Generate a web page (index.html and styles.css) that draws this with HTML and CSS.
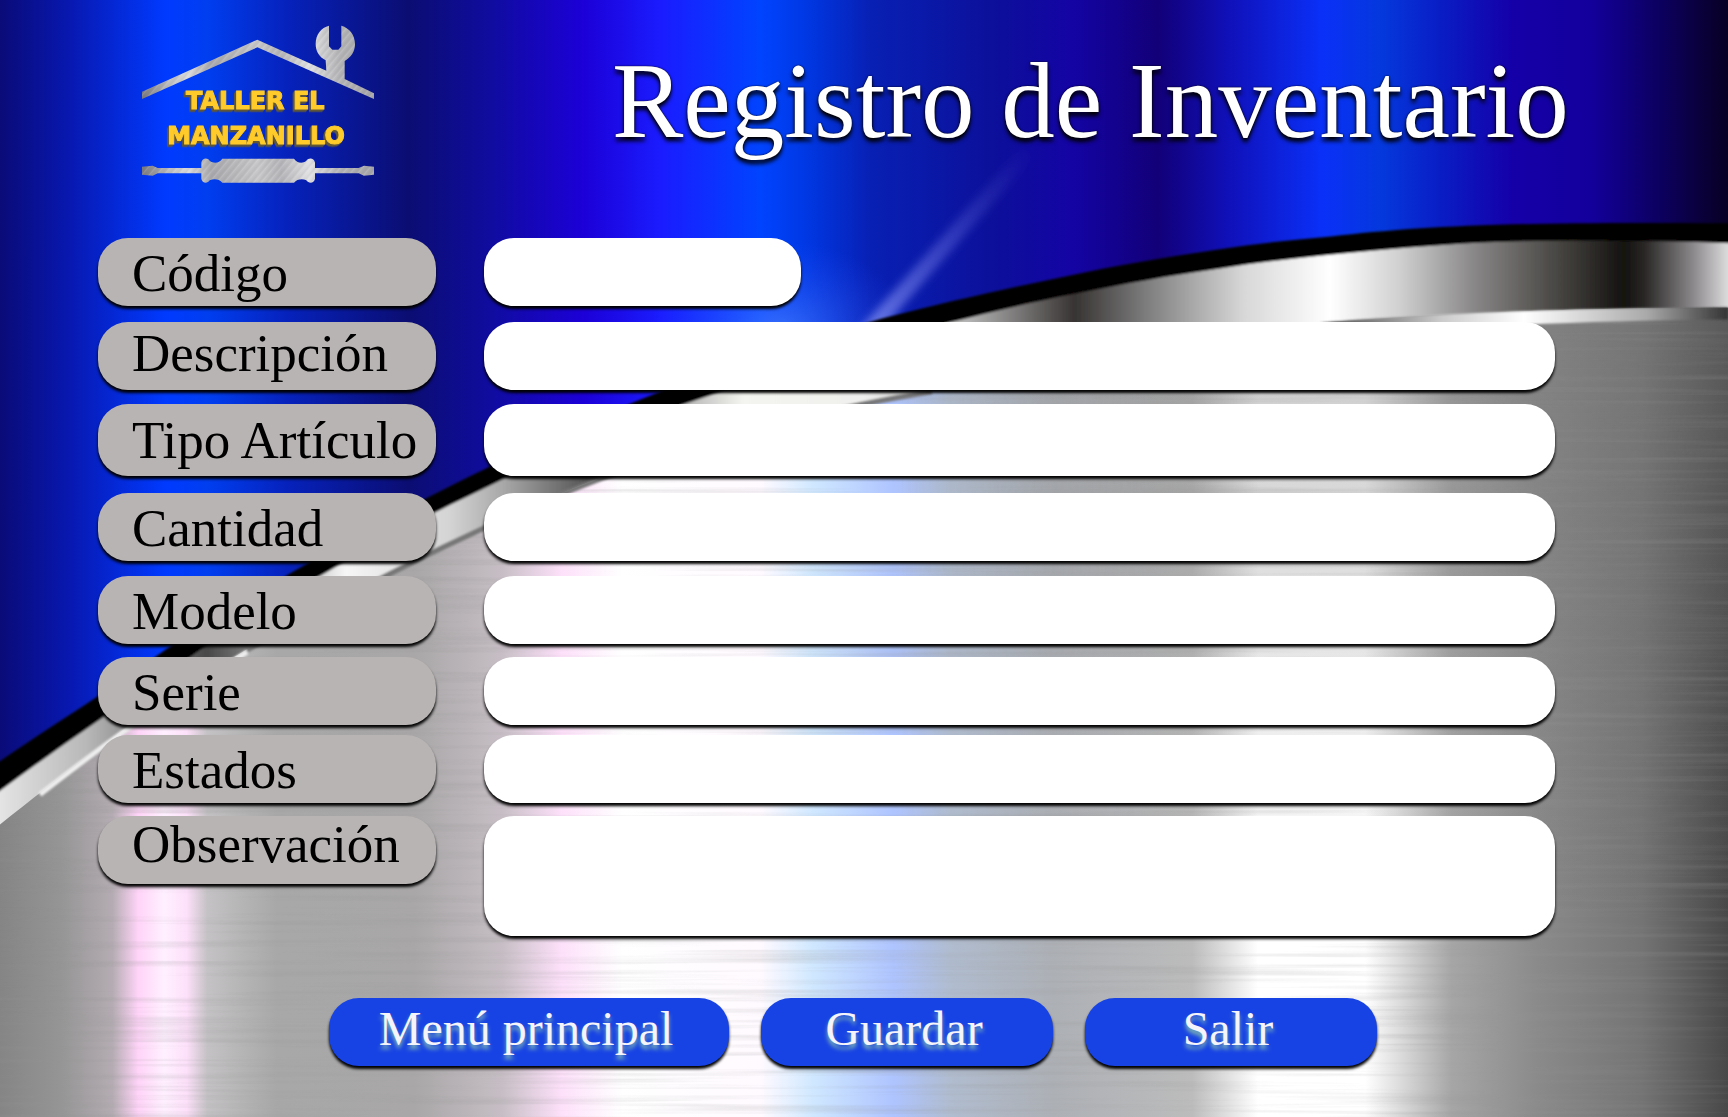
FILE: index.html
```html
<!DOCTYPE html>
<html lang="es">
<head>
<meta charset="utf-8">
<meta name="viewport" content="width=device-width, initial-scale=1">
<title>Registro de Inventario</title>
<link rel="stylesheet" href="styles.css">
</head>
<body>
<div class="page">
  <svg class="backdrop" viewBox="0 0 1728 1117" preserveAspectRatio="none" aria-hidden="true">
    <defs>
      <linearGradient id="blue">
        <stop offset="0" stop-color="#0a0b78"/><stop offset=".04" stop-color="#0818b0"/>
        <stop offset=".096" stop-color="#003aff"/><stop offset=".12" stop-color="#003ef0"/>
        <stop offset=".166" stop-color="#0622bc"/><stop offset=".236" stop-color="#0b0d72"/>
        <stop offset=".285" stop-color="#100ca0"/><stop offset=".338" stop-color="#1c00d8"/>
        <stop offset=".383" stop-color="#1a1cff"/><stop offset=".44" stop-color="#0044ff"/>
        <stop offset=".466" stop-color="#0038e4"/><stop offset=".504" stop-color="#0820b4"/>
        <stop offset=".574" stop-color="#0c109a"/><stop offset=".62" stop-color="#1404a4"/>
        <stop offset=".67" stop-color="#120078"/><stop offset=".71" stop-color="#1010b8"/>
        <stop offset=".765" stop-color="#0a30f8"/><stop offset=".80" stop-color="#0438dc"/>
        <stop offset=".835" stop-color="#0a1cc4"/><stop offset=".875" stop-color="#1500a8"/>
        <stop offset=".92" stop-color="#13009c"/><stop offset=".96" stop-color="#0c0060"/>
        <stop offset="1" stop-color="#080024"/>
      </linearGradient>
      <linearGradient id="band" gradientUnits="userSpaceOnUse" x1="0" y1="0" x2="1728" y2="0">
        <stop offset="0" stop-color="#e4e4e4"/><stop offset=".05" stop-color="#b8b8b8"/>
        <stop offset=".09" stop-color="#777"/><stop offset=".12" stop-color="#484848"/>
        <stop offset=".15" stop-color="#888"/><stop offset=".2" stop-color="#f6f6f6"/>
        <stop offset=".26" stop-color="#d4d4d4"/><stop offset=".29" stop-color="#aaa"/>
        <stop offset=".34" stop-color="#555"/><stop offset=".39" stop-color="#aaa"/>
        <stop offset=".43" stop-color="#f4f4f0"/><stop offset=".5" stop-color="#f0f0ee"/>
        <stop offset=".56" stop-color="#b4b4b4"/><stop offset=".622" stop-color="#383433"/>
        <stop offset=".665" stop-color="#808080"/><stop offset=".72" stop-color="#d8d8d8"/>
        <stop offset=".77" stop-color="#fff"/><stop offset=".81" stop-color="#d0d0d0"/>
        <stop offset=".855" stop-color="#868484"/><stop offset=".9" stop-color="#4a4845"/>
        <stop offset=".94" stop-color="#141210"/><stop offset=".952" stop-color="#2a2826"/>
        <stop offset=".98" stop-color="#8c898c"/><stop offset="1" stop-color="#dcdcdc"/>
      </linearGradient>
      <linearGradient id="steel" gradientUnits="userSpaceOnUse" x1="0" y1="0" x2="1728" y2="0">
        <stop offset="0" stop-color="#858585"/><stop offset=".035" stop-color="#959595"/>
        <stop offset=".065" stop-color="#b4acb2"/><stop offset=".08" stop-color="#ffd4f8"/>
        <stop offset=".095" stop-color="#fff0ff"/><stop offset=".108" stop-color="#fde0fa"/>
        <stop offset=".12" stop-color="#c4c2c4"/><stop offset=".16" stop-color="#a8a8a8"/>
        <stop offset=".24" stop-color="#a9a7a8"/><stop offset=".29" stop-color="#c6bec4"/>
        <stop offset=".325" stop-color="#fde0fa"/><stop offset=".36" stop-color="#fff"/>
        <stop offset=".44" stop-color="#fffaff"/><stop offset=".47" stop-color="#d0e8ff"/>
        <stop offset=".517" stop-color="#aec4ff"/><stop offset=".55" stop-color="#b0bccf"/>
        <stop offset=".61" stop-color="#adb0b5"/><stop offset=".69" stop-color="#bcbcbc"/>
        <stop offset=".728" stop-color="#fff"/><stop offset=".79" stop-color="#fff"/>
        <stop offset=".81" stop-color="#dcdcdc"/><stop offset=".84" stop-color="#a6a6a6"/>
        <stop offset=".89" stop-color="#8a8a8a"/><stop offset=".95" stop-color="#747474"/>
        <stop offset="1" stop-color="#484848"/>
      </linearGradient>
      <linearGradient id="shade" x1="0" y1="0" x2="0" y2="1">
        <stop offset="0" stop-color="#777" stop-opacity=".4"/>
        <stop offset=".4" stop-color="#777" stop-opacity=".2"/>
        <stop offset=".75" stop-color="#777" stop-opacity="0"/>
      </linearGradient>
      <linearGradient id="shadeEdge">
        <stop offset="0" stop-color="#000"/><stop offset=".3" stop-color="#fff"/>
      </linearGradient>
      <mask id="shadeMask"><rect x="900" y="300" width="828" height="817" fill="url(#shadeEdge)"/></mask>
      <linearGradient id="rim" gradientUnits="userSpaceOnUse" x1="1320" y1="0" x2="1728" y2="0">
        <stop offset="0" stop-color="#444"/><stop offset=".3" stop-color="#ccc"/>
        <stop offset=".5" stop-color="#fff"/><stop offset=".8" stop-color="#aaa"/>
        <stop offset="1" stop-color="#333"/>
      </linearGradient>
      <linearGradient id="ray" gradientUnits="userSpaceOnUse" x1="870" y1="320" x2="1035" y2="150">
        <stop offset="0" stop-color="#7f8cf0" stop-opacity=".75"/>
        <stop offset="1" stop-color="#5a5ad8" stop-opacity="0"/>
      </linearGradient>
      <radialGradient id="glow">
        <stop offset="0" stop-color="#5a8cff" stop-opacity=".6"/>
        <stop offset="1" stop-color="#2a50ff" stop-opacity="0"/>
      </radialGradient>
      <filter id="soft"><feGaussianBlur stdDeviation="4"/></filter>
      <filter id="edge"><feGaussianBlur stdDeviation="1"/></filter>
      <filter id="brushed" x="0" y="0" width="100%" height="100%">
        <feTurbulence type="fractalNoise" baseFrequency=".003 .16" numOctaves="3" seed="4"/>
        <feColorMatrix values="0 0 0 0 .3  0 0 0 0 .3  0 0 0 0 .3  2.4 0 0 0 -1.1"/>
      </filter>
      <clipPath id="plate">
        <path d="M0 823C120 728 160 700 247 648C400 564 500 515 603 476C750 424 850 403 932 390C1080 360 1200 340 1320 322C1414 315 1524 308 1728 307V1117H0Z"/>
      </clipPath>
    </defs>
    <rect width="1728" height="1117" fill="url(#blue)"/>
    <ellipse cx="780" cy="330" rx="130" ry="90" fill="url(#glow)"/>
    <path d="M845 345L888 322L1048 140L1028 140Z" fill="url(#ray)" filter="url(#soft)"/>
    <g filter="url(#edge)">
      <path d="M-9 766C50 725 90 702 166 648C250 595 340 542 425 498C500 460 580 422 660 391C740 362 810 338 882 318C960 298 1030 283 1104 268C1180 254 1255 242 1331 236C1420 226 1500 221 1737 223V1130H-9Z" fill="#000"/>
      <path d="M-9 796C50 752 103 716 207 644C255 612 290 592 339 564C400 528 450 504 508 476C570 444 640 418 712 394C790 366 870 343 949 322C990 312 1030 302 1076 293C1125 283 1170 275 1220 268C1270 260 1320 255 1375 250C1420 246 1465 242 1513 241C1590 239 1660 240 1737 243V1130H-9Z" fill="url(#band)"/>
    </g>
    <g clip-path="url(#plate)">
      <rect y="300" width="1728" height="817" fill="url(#steel)"/>
      <rect x="900" y="300" width="828" height="817" fill="url(#shade)" mask="url(#shadeMask)"/>
      <rect y="300" width="1728" height="817" filter="url(#brushed)" opacity=".24"/>
    </g>
    <g filter="url(#edge)" fill="none">
      <path d="M40 793C120 731 160 703 247 651" stroke="#eee" stroke-width="5"/>
      <path d="M247 649C400 565 500 516 603 477C750 425 850 404 932 391" stroke="#777" stroke-width="5"/>
    </g>
    <path d="M1320 322C1414 315 1524 308 1728 307V319C1600 320 1500 325 1400 330Z" fill="url(#rim)" filter="url(#edge)"/>
  </svg>

  <header class="header">
    <svg class="logo" viewBox="66 40 699 480" role="img" aria-label="Taller El Manzanillo">
      <defs>
        <linearGradient id="metal" gradientUnits="userSpaceOnUse" x1="66" y1="0" x2="762" y2="0">
          <stop offset="0" stop-color="#77777c"/><stop offset=".12" stop-color="#bdbdc0"/>
          <stop offset=".2" stop-color="#d8d8da"/><stop offset=".3" stop-color="#a8a8ac"/>
          <stop offset=".5" stop-color="#c6c6c8"/><stop offset=".6" stop-color="#b4b4b8"/>
          <stop offset=".72" stop-color="#e0e0e2"/><stop offset=".85" stop-color="#b4b4b6"/>
          <stop offset="1" stop-color="#a4a4a8"/>
        </linearGradient>
        <pattern id="grain" width="17" height="40" patternUnits="userSpaceOnUse" patternTransform="rotate(40)">
          <rect x="2" width="2" height="40" fill="#666" opacity=".18"/>
          <rect x="9" width="3" height="40" fill="#fff" opacity=".18"/>
        </pattern>
        <g id="tools">
          <path d="M66 243L412 87L619 180L617 149C596 138 587 120 587 100C587 72 604 50 627 45V107L637 117H655L664 107V45C689 52 705 74 705 100C705 123 693 140 674 151V205L762 248V265L412 110L66 265Z"/>
          <path d="M66 468L98 465L113 472H244V456C247 441 263 441 269 450C282 460 298 457 307 444H522C531 457 547 460 559 450C566 441 582 441 585 456V472H716L732 465L762 468V492L732 495L716 488H585V504C582 519 566 519 559 509C547 503 531 505 522 516H307C298 505 282 503 269 509C263 519 247 519 244 504V488H113L98 495L66 492Z"/>
        </g>
      </defs>
      <use href="#tools" fill="url(#metal)"/>
      <use href="#tools" fill="url(#grain)"/>
      <text class="logo-text" x="406" y="296">TALLER EL</text>
      <text class="logo-text" x="408" y="401">MANZANILLO</text>
    </svg>
    <h1 class="title">Registro de Inventario</h1>
  </header>

  <form class="form">
    <div class="fields">
      <label class="pill" for="codigo">Código</label>
      <input class="field field-short" id="codigo" type="text">
      <label class="pill pill-raised" for="descripcion">Descripción</label>
      <input class="field" id="descripcion" type="text">
      <label class="pill pill-tall" for="tipo">Tipo Artículo</label>
      <input class="field field-tall" id="tipo" type="text">
      <label class="pill" for="cantidad">Cantidad</label>
      <input class="field" id="cantidad" type="text">
      <label class="pill" for="modelo">Modelo</label>
      <input class="field" id="modelo" type="text">
      <label class="pill" for="serie">Serie</label>
      <input class="field" id="serie" type="text">
      <label class="pill" for="estados">Estados</label>
      <input class="field" id="estados" type="text">
      <label class="pill pill-high" for="observacion">Observación</label>
      <textarea class="field field-area" id="observacion"></textarea>
    </div>
    <div class="actions">
      <button class="button button-wide" type="button">Menú principal</button>
      <button class="button" type="submit">Guardar</button>
      <button class="button" type="button">Salir</button>
    </div>
  </form>
</div>
</body>
</html>
```
FILE: styles.css
```css
* {
  box-sizing: border-box;
}

body {
  margin: 0;
  font-family: "Liberation Serif", serif;
  color: #000;
}

.page {
  position: relative;
  min-height: 100vh;
  overflow: hidden;
}

/* Painted behind the whole page */
.backdrop {
  position: absolute;
  inset: 0;
  z-index: -1;
  width: 100%;
  height: 100%;
}

.header {
  display: flex;
  align-items: flex-start;
  gap: 237px;
  min-height: 238px;
  padding: 24px 0 0 142px;
}

.logo {
  flex: none;
  width: 233px;
  height: 160px;
}

.logo-text {
  font-family: "DejaVu Sans", sans-serif;
  font-size: 72px;
  font-weight: 700;
  text-anchor: middle;
  fill: #ffcb2b;
  stroke: #ffcb2b;
  stroke-width: 3px;
  filter: drop-shadow(-3px 4px 0 #5f5638) drop-shadow(-3px 3px 0 #5f5638);
}

.title {
  margin: 17px 0 0;
  font-size: 107px;
  font-weight: 400;
  line-height: 120px;
  white-space: nowrap;
  color: #fff;
  text-shadow: 0 0 2px #000, 0 4px 4px #000;
}

.form {
  padding: 0 10% 53px 98px;
}

.fields {
  display: grid;
  grid-template-columns: 338px 1fr;
  grid-template-rows: 84px 82px 89px 83px 81px 78px 81px 120px;
  column-gap: 48px;
  align-items: start;
}

.pill,
.field,
.button {
  height: 68px;
  border: 0;
  border-radius: 30px;
  box-shadow: 0 3px 3px #000;
}

.pill {
  padding-left: 34px;
  font-size: 53px;
  line-height: 70px;
  white-space: nowrap;
  background: #b8b4b3;
}

.pill-raised {
  line-height: 62px;
}

.pill-high {
  line-height: 56px;
}

.field {
  width: 100%;
  padding: 0 32px;
  font: inherit;
  font-size: 40px;
  background: #fff;
}

.field-short {
  width: 317px;
}

.pill-tall,
.field-tall {
  height: 72px;
}

.pill-tall {
  line-height: 72px;
}

.field-area {
  height: 120px;
  padding: 16px 32px;
  resize: none;
}

.actions {
  display: flex;
  gap: 32px;
  margin: 62px 0 0 231px;
}

.button {
  width: 292px;
  padding: 0 6px 8px 0;
  font: inherit;
  font-size: 48px;
  color: #f4f4fa;
  background: #1843e4;
  text-shadow: 0 4px 4px #7fb8b0;
}

.button-wide {
  width: 400px;
}
```
